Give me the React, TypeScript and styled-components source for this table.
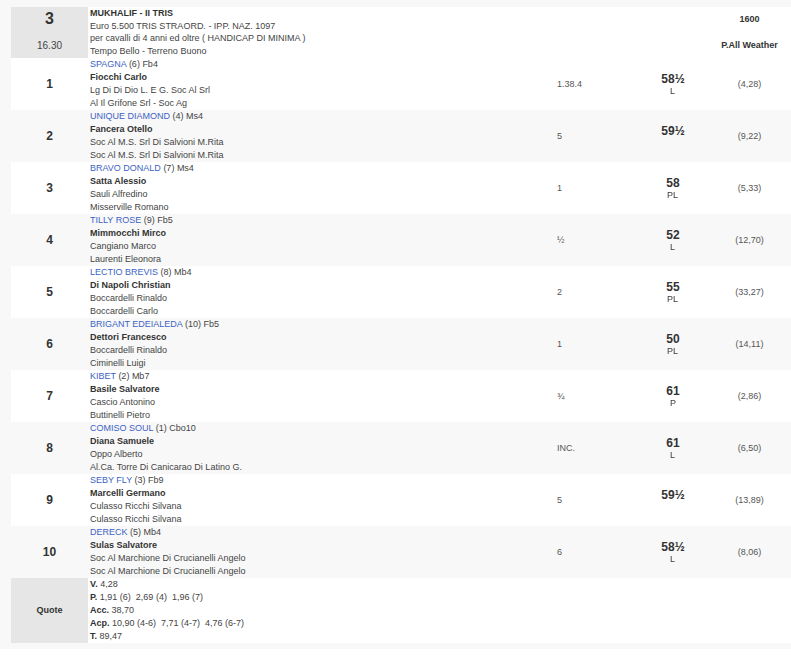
import React from 'react';
import { styled, createGlobalStyle } from 'styled-components';

const GlobalStyle = createGlobalStyle`
  body {
    margin: 0;
    background: #fff;
    font-family: "Liberation Sans", Arial, sans-serif;
    -webkit-font-smoothing: antialiased;
  }
`;

const Page = styled.div`
  background: #f8f8f8;
  padding: 7px 0 6px 11px;
  box-shadow: 0 1px 1px rgba(0, 0, 0, 0.07);
`;

const Table = styled.div`
  display: flex;
  flex-direction: column;
`;

const cols = '77px 467px 70px 96px 57px 1fr';

const HeadRow = styled.div`
  display: grid;
  grid-template-columns: ${cols};
  height: 51px;
  background: #fff;
  color: #444;
  font-size: 9px;
`;

const RaceCell = styled.div`
  background: #e6e6e6;
  display: flex;
  flex-direction: column;
  align-items: center;
  padding-top: 3px;
  color: #333;
`;

const RaceNumber = styled.div`
  font-size: 16px;
  font-weight: 700;
  line-height: 18px;
`;

const RaceTime = styled.div`
  margin-top: 11px;
  font-size: 10px;
  line-height: 13px;
  color: #444;
`;

const RaceInfo = styled.div`
  grid-column: span 3;
  padding-left: 2px;
  line-height: 12.7px;
`;

const Title = styled.div`
  font-weight: 700;
  color: #333;
`;

const TrackCell = styled.div`
  display: flex;
  flex-direction: column;
  align-items: center;
  justify-content: center;
  font-weight: 700;
  color: #333;
  line-height: 13px;
  white-space: nowrap;
  gap: 13px;
`;

const Row = styled.div<{ $white: boolean }>`
  display: grid;
  grid-template-columns: ${cols};
  height: 52px;
  background: ${(p) => (p.$white ? '#fff' : 'transparent')};
  color: #444;
  font-size: 9px;
  line-height: 13px;
`;

const NumCell = styled.div`
  display: flex;
  align-items: center;
  justify-content: center;
  font-size: 12px;
  font-weight: 700;
  color: #333;
`;

const Runner = styled.div`
  padding-left: 2px;
  white-space: nowrap;
`;

const Horse = styled.span`
  color: #3d63c4;
`;

const Jockey = styled.div`
  font-weight: 700;
  color: #333;
`;

const TimeCell = styled.div`
  display: flex;
  align-items: center;
  padding-left: 2px;
  color: #555;
`;

const WeightCell = styled.div`
  display: flex;
  flex-direction: column;
  align-items: center;
  justify-content: center;
  padding-top: 1px;
  color: #333;
`;

const Weight = styled.div`
  font-size: 12px;
  font-weight: 700;
  line-height: 13px;
`;

const Equip = styled.div`
  font-size: 9px;
  line-height: 11px;
  min-height: 11px;
  color: #3a3a3a;
  will-change: transform;
`;

const OddsCell = styled.div`
  display: flex;
  align-items: center;
  justify-content: center;
  color: #555;
`;

const QuoteRow = styled.div`
  display: grid;
  grid-template-columns: 77px 1fr;
  height: 65px;
  background: #fff;
  color: #444;
  font-size: 9px;
  line-height: 13px;
`;

const QuoteHead = styled.div`
  background: #e6e6e6;
  display: flex;
  align-items: center;
  justify-content: center;
  font-weight: 700;
  color: #333;
`;

const QuoteList = styled.div`
  padding-left: 2px;
  white-space: pre;
`;

const Label = styled.b`
  color: #333;
`;

type Entry = {
  n: number;
  horse: string;
  extra: string;
  jockey: string;
  trainer: string;
  owner: string;
  time: string;
  weight: string;
  equip: string;
  odds: string;
};

const entries: Entry[] = [
  { n: 1, horse: 'SPAGNA', extra: '(6) Fb4', jockey: 'Fiocchi Carlo', trainer: 'Lg Di Di Dio L. E G. Soc Al Srl', owner: 'Al Il Grifone Srl - Soc Ag', time: '1.38.4', weight: '58½', equip: 'L', odds: '(4,28)' },
  { n: 2, horse: 'UNIQUE DIAMOND', extra: '(4) Ms4', jockey: 'Fancera Otello', trainer: 'Soc Al M.S. Srl Di Salvioni M.Rita', owner: 'Soc Al M.S. Srl Di Salvioni M.Rita', time: '5', weight: '59½', equip: '', odds: '(9,22)' },
  { n: 3, horse: 'BRAVO DONALD', extra: '(7) Ms4', jockey: 'Satta Alessio', trainer: 'Sauli Alfredino', owner: 'Misserville Romano', time: '1', weight: '58', equip: 'PL', odds: '(5,33)' },
  { n: 4, horse: 'TILLY ROSE', extra: '(9) Fb5', jockey: 'Mimmocchi Mirco', trainer: 'Cangiano Marco', owner: 'Laurenti Eleonora', time: '½', weight: '52', equip: 'L', odds: '(12,70)' },
  { n: 5, horse: 'LECTIO BREVIS', extra: '(8) Mb4', jockey: 'Di Napoli Christian', trainer: 'Boccardelli Rinaldo', owner: 'Boccardelli Carlo', time: '2', weight: '55', equip: 'PL', odds: '(33,27)' },
  { n: 6, horse: 'BRIGANT EDEIALEDA', extra: '(10) Fb5', jockey: 'Dettori Francesco', trainer: 'Boccardelli Rinaldo', owner: 'Ciminelli Luigi', time: '1', weight: '50', equip: 'PL', odds: '(14,11)' },
  { n: 7, horse: 'KIBET', extra: '(2) Mb7', jockey: 'Basile Salvatore', trainer: 'Cascio Antonino', owner: 'Buttinelli Pietro', time: '¾', weight: '61', equip: 'P', odds: '(2,86)' },
  { n: 8, horse: 'COMISO SOUL', extra: '(1) Cbo10', jockey: 'Diana Samuele', trainer: 'Oppo Alberto', owner: 'Al.Ca. Torre Di Canicarao Di Latino G.', time: 'INC.', weight: '61', equip: 'L', odds: '(6,50)' },
  { n: 9, horse: 'SEBY FLY', extra: '(3) Fb9', jockey: 'Marcelli Germano', trainer: 'Culasso Ricchi Silvana', owner: 'Culasso Ricchi Silvana', time: '5', weight: '59½', equip: '', odds: '(13,89)' },
  { n: 10, horse: 'DERECK', extra: '(5) Mb4', jockey: 'Sulas Salvatore', trainer: 'Soc Al Marchione Di Crucianelli Angelo', owner: 'Soc Al Marchione Di Crucianelli Angelo', time: '6', weight: '58½', equip: 'L', odds: '(8,06)' },
];

function RaceResult() {
  return (
    <Page>
      <Table>
        <HeadRow>
          <RaceCell>
            <RaceNumber>3</RaceNumber>
            <RaceTime>16.30</RaceTime>
          </RaceCell>
          <RaceInfo>
            <Title>MUKHALIF - II TRIS</Title>
            <div>Euro 5.500 TRIS STRAORD. - IPP. NAZ. 1097</div>
            <div>per cavalli di 4 anni ed oltre ( HANDICAP DI MINIMA )</div>
            <div>Tempo Bello - Terreno Buono</div>
          </RaceInfo>
          <TrackCell>
            <div>1600</div>
            <div>P.All Weather</div>
          </TrackCell>
        </HeadRow>

        {entries.map((e, i) => (
          <Row key={e.n} $white={i % 2 === 0}>
            <NumCell>{e.n}</NumCell>
            <Runner>
              <div>
                <Horse>{e.horse}</Horse> {e.extra}
              </div>
              <Jockey>{e.jockey}</Jockey>
              <div>{e.trainer}</div>
              <div>{e.owner}</div>
            </Runner>
            <TimeCell>{e.time}</TimeCell>
            <WeightCell>
              <Weight>{e.weight}</Weight>
              <Equip>{e.equip}</Equip>
            </WeightCell>
            <OddsCell>{e.odds}</OddsCell>
          </Row>
        ))}

        <QuoteRow>
          <QuoteHead>Quote</QuoteHead>
          <QuoteList>
            <div><Label>V.</Label> 4,28</div>
            <div><Label>P.</Label> 1,91 (6)  2,69 (4)  1,96 (7)</div>
            <div><Label>Acc.</Label> 38,70</div>
            <div><Label>Acp.</Label> 10,90 (4-6)  7,71 (4-7)  4,76 (6-7)</div>
            <div><Label>T.</Label> 89,47</div>
          </QuoteList>
        </QuoteRow>
      </Table>
    </Page>
  );
}

export default function App() {
  return (
    <>
      <GlobalStyle />
      <RaceResult />
    </>
  );
}
